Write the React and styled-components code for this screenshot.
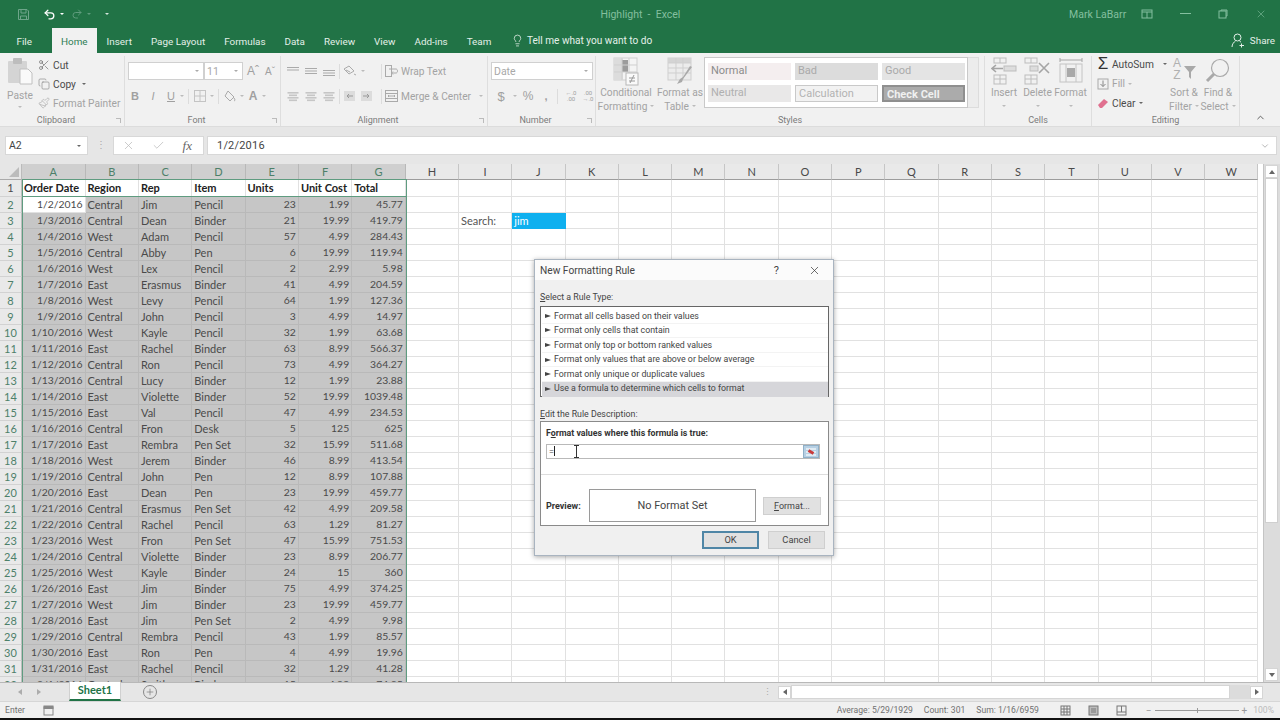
import React from 'react';
import styled, { createGlobalStyle } from 'styled-components';
import { Undo2, Redo2, Lightbulb, Scissors, Copy, Paintbrush, ChevronUp, ChevronDown, X, Check, Plus } from 'lucide-react';

const GlobalStyle = createGlobalStyle`
  html, body { margin: 0; padding: 0; background: #000; }
  body { font-family: Roboto, "Open Sans", sans-serif; overflow: hidden; }
  * { box-sizing: border-box; }
`;

const Page = styled.div`
  position: relative;
  width: 1280px;
  height: 720px;
  display: flex;
  flex-direction: column;
  overflow: hidden;
  background: #efefef;
  border-bottom: 2px solid #111;
`;

/* title bar */
const TitleBar = styled.div`
  height: 28px;
  background: #217346;
  display: flex;
  align-items: center;
  color: #84bf9f;
  font-size: 10.5px;
  position: relative;
`;
const QuickAccess = styled.div`
  display: flex;
  align-items: center;
  width: 581px;
  padding-left: 17px;
  gap: 4px;
`;
const Caret = styled.span`
  width: 0;
  height: 0;
  border-left: 2px solid transparent;
  border-right: 2px solid transparent;
  border-top: 2.5px solid ${(p) => p.$color || '#8a8a8a'};
  margin-left: ${(p) => p.$gap || 0}px;
  display: inline-block;
  flex: none;
`;
const DocTitle = styled.div`
  width: 142px;
  text-align: center;
  white-space: pre;
`;
const UserName = styled.div`
  margin-left: 359px;
  width: 60px;
  white-space: nowrap;
`;
const WinButtons = styled.div`
  display: flex;
  align-items: center;
`;
const WinButton = styled.div`
  width: 38px;
  display: flex;
  justify-content: center;
`;

/* tabs */
const TabBar = styled.div`
  height: 25px;
  background: #217346;
  display: flex;
  align-items: stretch;
  padding-left: 7px;
  font-size: 9.9px;
  color: #e4f0e9;
`;
const Tab = styled.div`
  padding: 1px 9.5px 0;
  display: flex;
  align-items: center;
  white-space: nowrap;
  background: ${(p) => (p.$active ? '#f1f1f1' : 'transparent')};
  color: ${(p) => (p.$active ? '#2f7d55' : '#e4f0e9')};
  margin-right: ${(p) => p.$mr || 0}px;
`;
const TellMe = styled.div`
  display: flex;
  align-items: center;
  gap: 3px;
  margin-left: 10px;
  font-size: 10.1px;
  white-space: nowrap;
`;
const Share = styled.div`
  margin-left: auto;
  display: flex;
  align-items: center;
  gap: 5px;
  padding-right: 5px;
`;

/* ribbon */
const Ribbon = styled.div`
  height: 74px;
  background: #f1f1f1;
  border-bottom: 1px solid #dcdcdc;
  display: flex;
  color: #a3a3a3;
  font-size: 10.2px;
  position: relative;
`;
const GroupBox = styled.div`
  width: ${(p) => p.$w}px;
  flex: none;
  border-right: 1px solid #dedede;
  margin: 3px 0 0;
  height: 70px;
  display: flex;
  flex-direction: column;
  position: relative;
`;
const GroupBody = styled.div`
  height: 56px;
  flex: none;
  display: flex;
  padding-left: ${(p) => p.$pl || 0}px;
  gap: ${(p) => p.$gap || 0}px;
`;
const GroupLabel = styled.div`
  height: 13px;
  flex: none;
  margin-top: 2px;
  padding-right: ${(p) => (p.$launcher ? 12 : 0)}px;
  font-size: 9px;
  line-height: 13px;
  text-align: center;
  color: #7b7b7b;
`;
const Launcher = styled.span`
  position: absolute;
  right: 3px;
  bottom: 3px;
  width: 5px;
  height: 5px;
  border-left: 1px solid #bbb;
  border-bottom: 1px solid #bbb;
  transform: rotate(180deg);
`;
const PasteBtn = styled.div`
  width: 34px;
  display: flex;
  flex-direction: column;
  align-items: center;
  line-height: 13.5px;
  svg { flex: none; margin-bottom: 3px; }
`;
const SmallCol = styled.div`
  display: flex;
  flex-direction: column;
  justify-content: space-between;
  flex: none;
  width: ${(p) => (p.$w ? `${p.$w}px` : 'auto')};
  margin-left: ${(p) => p.$ml || 0}px;
  padding: ${(p) => p.$top || 0}px 0 1px;
`;
const SmallBtn = styled.div`
  display: flex;
  align-items: center;
  gap: 3px;
  height: 16px;
  white-space: nowrap;
  color: ${(p) => (p.$on ? '#4a4a4a' : '#a3a3a3')};
`;
const SumGlyph = styled.span`
  width: 12px;
  font-size: 17px;
  line-height: 14px;
  font-weight: 500;
  text-align: center;
  color: #333;
  font-family: "Liberation Sans", sans-serif;
`;
const RowCol = styled.div`
  display: flex;
  flex-direction: column;
  gap: 7px;
  padding-top: 6px;
`;
const ToolRow = styled.div`
  display: flex;
  align-items: center;
  height: 18px;
  gap: ${(p) => p.$gap || 0}px;
  margin-left: ${(p) => p.$ml || 0}px;
  white-space: nowrap;
`;
const FieldBox = styled.div`
  width: ${(p) => p.$w}px;
  height: 18px;
  background: #fff;
  border: 1px solid #d0d0d0;
  display: flex;
  align-items: center;
  justify-content: space-between;
  padding: 0 4px 0 2px;
  font-size: 10.5px;
  color: #a8a8a8;
  margin-right: ${(p) => p.$mr || 0}px;
`;
const Glyph = styled.span`
  width: ${(p) => p.$w || 18}px;
  text-align: center;
  font-weight: ${(p) => (p.$bold ? 700 : 400)};
  font-style: ${(p) => (p.$italic ? 'italic' : 'normal')};
  text-decoration: ${(p) => (p.$under ? 'underline' : 'none')};
  font-size: ${(p) => p.$size || 11}px;
  color: #a0a0a0;
  font-family: "Liberation Sans", sans-serif;
`;
const DecimalGlyph = styled.span`
  width: ${(p) => p.$w}px;
  font-size: 6px;
  line-height: 6.5px;
  text-align: center;
  color: #a0a0a0;
  white-space: pre;
`;
const Divider = styled.span`
  width: 1px;
  height: 15px;
  background: #dcdcdc;
  margin: 0 ${(p) => p.$mr ?? 4}px 0 ${(p) => p.$ml ?? 4}px;
  flex: none;
`;
const BigBtn = styled.div`
  width: ${(p) => p.$w || 50}px;
  flex: none;
  display: flex;
  flex-direction: column;
  align-items: center;
  text-align: center;
  line-height: 13.5px;
  padding-top: 1px;
  white-space: nowrap;
  svg { flex: none; }
`;
const CaretLine = styled.span`
  height: 13.5px;
  display: flex;
  align-items: center;
`;
const Gallery = styled.div`
  width: 264px;
  height: 51px;
  margin: 1px 0 0 0;
  background: #fff;
  border: 1px solid #c9c9c9;
  display: grid;
  grid-template-columns: repeat(3, 83px);
  grid-auto-rows: 17px;
  gap: 5px 4px;
  padding: 5px 3px;
`;
const StyleChip = styled.div`
  background: ${(p) => p.$bg || '#f4eeef'};
  border: ${(p) => (p.$border ? `${p.$bw || 1}px solid ${p.$border}` : 'none')};
  color: ${(p) => p.$color || '#a0a0a0'};
  font-weight: ${(p) => (p.$bold ? 700 : 400)};
  font-size: 11px;
  line-height: 16px;
  padding-left: 3px;
  white-space: nowrap;
`;
const GalleryScroll = styled.div`
  width: 11px;
  height: 51px;
  margin-top: 1px;
  background: #ececec;
  border: 1px solid #dcdcdc;
  border-left: none;
`;
const Collapse = styled.div`
  position: absolute;
  right: 14px;
  bottom: 3px;
  color: #555;
  display: flex;
`;

/* formula bar */
const FormulaStrip = styled.div`
  height: 37px;
  background: #e6e6e6;
  display: flex;
  align-items: flex-start;
  padding: 9px 3px 0 5px;
`;
const NameBox = styled.div`
  width: 83px;
  height: 19px;
  background: #fff;
  border: 1px solid #d8d8d8;
  font-size: 10.5px;
  color: #444;
  display: flex;
  align-items: center;
  justify-content: space-between;
  padding: 0 6px 0 3px;
`;
const Grip = styled.div`
  width: 25px;
  text-align: center;
  color: #aaa;
  font-size: 10px;
  line-height: 17px;
`;
const FxBox = styled.div`
  width: 91px;
  height: 19px;
  background: #fff;
  border: 1px solid #d8d8d8;
  display: flex;
  align-items: center;
  justify-content: space-between;
  color: #bbb;
  padding: 0 11px 0 8px;
`;
const Fx = styled.span`
  font-family: "Liberation Serif", serif;
  font-style: italic;
  font-size: 13px;
  color: #666;
`;
const FormulaInput = styled.div`
  flex: 1;
  height: 19px;
  margin-left: 3px;
  background: #fff;
  border: 1px solid #d8d8d8;
  font-size: 11px;
  letter-spacing: 0.2px;
  color: #444;
  display: flex;
  align-items: center;
  justify-content: space-between;
  padding: 0 6px 0 9px;
`;

/* sheet */
const SheetArea = styled.div`
  flex: 1;
  display: flex;
  background: #fff;
  min-height: 0;
  overflow: hidden;
`;
const GridWrap = styled.div`
  position: relative;
  width: 1264px;
  height: 100%;
  overflow: hidden;
  border-right: 1px solid #c4c4c4;
`;
const Grid = styled.div`
  display: grid;
  grid-template-columns: 22px 63.5px 53.5px 53.3px 53.3px 53.3px 53.3px 53.5px repeat(16, 53.3px);
  grid-template-rows: 16px 17px repeat(31, 16px);
  font-size: 11px;
  font-family: Lato, "Open Sans", sans-serif;
  color: #4d4d4d;
`;
const Corner = styled.div`
  background: #e6e6e6;
  border-right: 1px solid #bbb;
  border-bottom: 1px solid #aaa;
  position: relative;
  &::after {
    content: '';
    position: absolute;
    right: 2px;
    bottom: 2px;
    border-style: solid;
    border-width: 0 0 10px 10px;
    border-color: transparent transparent #bcbcbc transparent;
  }
`;
const ColHead = styled.div`
  background: ${(p) => (p.$sel ? '#cfcfcf' : '#e9e9e9')};
  border-right: 1px solid ${(p) => (p.$sel ? '#b8b8b8' : '#c6c6c6')};
  border-bottom: 1px solid #9c9c9c;
  color: ${(p) => (p.$sel ? '#4d8069' : '#4a4a4a')};
  font-size: 11px;
  line-height: 15px;
  text-align: center;
`;
const RowHead = styled.div`
  background: #e9e9e9;
  border-right: 1px solid #bdbdbd;
  border-bottom: 1px solid #d2d2d2;
  color: ${(p) => (p.$sel ? '#4d8069' : '#4a4a4a')};
  font-size: 11px;
  line-height: 15px;
  text-align: center;
`;
const Cell = styled.div`
  background: ${(p) => (p.$sel ? '#c6c6c6' : '#fff')};
  border-right: 1px solid ${(p) => (p.$sel ? '#b9b9b9' : '#e1e1e1')};
  border-bottom: 1px solid ${(p) => (p.$sel ? '#b9b9b9' : '#e1e1e1')};
  text-align: ${(p) => (p.$right ? 'right' : 'left')};
  font-size: ${(p) => (p.$right ? 10.4 : 11)}px;
  font-weight: ${(p) => (p.$bold ? 700 : 400)};
  color: ${(p) => (p.$bold ? '#222' : '#4a4a4a')};
  padding: 0 2px;
  line-height: 15px;
  white-space: nowrap;
  overflow: visible;
`;
const SearchLabel = styled(Cell)`
  color: #555;
  padding-left: 2px;
`;
const SearchCell = styled(Cell)`
  background: #0fb0ef;
  color: #fff;
  border-color: #0fb0ef;
`;
const HeaderFrame = styled.div`
  position: absolute;
  left: 22px;
  top: 15px;
  width: 385px;
  height: 18px;
  border: 1.5px solid #5f9c80;
  pointer-events: none;
`;
const BodyFrame = styled.div`
  position: absolute;
  left: 22px;
  top: 32px;
  width: 385px;
  height: 500px;
  border: 1.5px solid #5f9c80;
  pointer-events: none;
`;
const VScroll = styled.div`
  flex: 1;
  background: #dcdcdc;
  padding: 1px 2px 0 1px;
  display: flex;
  flex-direction: column;
`;
const ScrollBtn = styled.div`
  height: 13px;
  width: 13px;
  background: #fff;
  border: 1px solid #d5d5d5;
  display: flex;
  align-items: center;
  justify-content: center;
  margin-top: ${(p) => (p.$end ? 'auto' : '0')};
  margin-bottom: ${(p) => (p.$end ? '1px' : '0')};
`;
const Arrow = styled.span`
  width: 0;
  height: 0;
  border-style: solid;
  border-color: transparent;
  ${(p) => p.$dir === 'up' && 'border-width: 0 3px 4px; border-bottom-color: #666;'}
  ${(p) => p.$dir === 'down' && 'border-width: 4px 3px 0; border-top-color: #666;'}
  ${(p) => p.$dir === 'left' && 'border-width: 3px 4px 3px 0; border-right-color: #666;'}
  ${(p) => p.$dir === 'right' && 'border-width: 3px 0 3px 4px; border-left-color: #666;'}
`;
const VThumb = styled.div`
  height: 345px;
  background: #fff;
  border: 1px solid #cfcfcf;
  margin: 0;
  width: 13px;
`;

/* sheet tabs */
const TabStrip = styled.div`
  height: 19px;
  background: #e6e6e6;
  border-top: 1px solid #b8b8b8;
  display: flex;
  align-items: stretch;
  position: relative;
`;
const NavArrows = styled.div`
  width: 69px;
  display: flex;
  align-items: center;
  gap: 15px;
  padding-left: 18px;
  opacity: 0.45;
`;
const SheetTab = styled.div`
  width: 52px;
  background: #fff;
  border-bottom: 2px solid #217346;
  border-left: 1px solid #d0d0d0;
  border-right: 1px solid #d0d0d0;
  color: #217346;
  font-family: Lato, sans-serif;
  font-weight: 700;
  font-size: 11px;
  text-align: center;
  line-height: 15px;
  margin-top: -1px;
`;
const AddSheet = styled.div`
  width: 14px;
  height: 14px;
  margin: 2px 0 0 22px;
  border: 1px solid #888;
  border-radius: 50%;
  display: flex;
  align-items: center;
  justify-content: center;
  color: #777;
`;
const HScrollWrap = styled.div`
  margin-left: auto;
  display: flex;
  align-items: center;
  width: 520px;
  padding-right: 17px;
`;
const HScrollGrip = styled.div`
  width: 18px;
  padding-right: 4px;
  color: #aaa;
  font-size: 9px;
  line-height: 1;
  text-align: center;
`;
const HBtn = styled.div`
  width: 13px;
  height: 13px;
  background: #fff;
  border: 1px solid #d5d5d5;
  display: flex;
  align-items: center;
  justify-content: center;
`;
const HThumb = styled.div`
  width: 439px;
  height: 14px;
  background: #fff;
  border: 1px solid #d5d5d5;
`;
const HTrack = styled.div`
  flex: 1;
  height: 14px;
  background: #dcdcdc;
`;

/* status bar */
const StatusBar = styled.div`
  height: 17px;
  background: #f0f0f0;
  border-top: 1px solid #d6d6d6;
  display: flex;
  align-items: center;
  color: #707070;
  font-size: 8.6px;
  padding-left: 5px;
`;
const MacroSlot = styled.span`
  margin-left: 18px;
  display: flex;
`;
const StatusStats = styled.div`
  margin-left: auto;
  display: flex;
  gap: 11px;
  white-space: nowrap;
`;
const ViewIcons = styled.div`
  display: flex;
  gap: 17px;
  margin-left: 21px;
  align-items: center;
`;
const Zoomer = styled.div`
  display: flex;
  align-items: center;
  margin-left: 19px;
  gap: 3px;
  font-size: 10px;
  color: #999;
`;
const ZoomTrack = styled.div`
  width: 84px;
  height: 1px;
  background: #999;
  position: relative;
  &::after {
    content: '';
    position: absolute;
    left: 42px;
    top: -2px;
    width: 1px;
    height: 5px;
    background: #999;
  }
`;
const ZoomPct = styled.span`
  margin: 0 6px 0 6px;
  color: #bbb;
`;

/* dialog */
const Dialog = styled.div`
  position: absolute;
  left: 534px;
  top: 259px;
  width: 300px;
  height: 297px;
  background: #f0f0f0;
  border: 1px solid #a9b4c0;
  box-shadow: 0 1px 5px rgba(0, 0, 0, 0.35);
  font-size: 8.8px;
  color: #444;
  display: flex;
  flex-direction: column;
`;
const DialogHead = styled.div`
  height: 20px;
  background: #fbfbfb;
  display: flex;
  align-items: center;
  padding: 0 12px 0 5px;
  font-size: 10.2px;
  color: #444;
`;
const DialogHeadHelp = styled.span`
  margin-left: auto;
  margin-right: 29px;
  font-size: 11px;
`;
const FieldLabel = styled.div`
  padding-left: 5px;
  height: 13px;
  line-height: 13px;
  margin-top: ${(p) => p.$mt}px;
  u { text-decoration: underline; }
`;
const RuleList = styled.div`
  margin: 2px 4px 0 5px;
  height: 91px;
  background: #fff;
  border: 1px solid #666;
  padding: 2px 0 0 1px;
`;
const RuleItem = styled.div`
  height: 14.6px;
  line-height: 14.6px;
  padding-left: 3px;
  display: flex;
  align-items: center;
  gap: 3px;
  background: ${(p) => (p.$sel ? '#d6d6da' : 'transparent')};
  border-bottom: 1px solid ${(p) => (p.$sel ? 'transparent' : '#f3f3f3')};
  white-space: nowrap;
  font-size: 8.8px;
`;
const RuleArrow = styled.span`
  width: 0;
  height: 0;
  border-style: solid;
  border-color: transparent transparent transparent #444;
  border-width: 2px 0 2px 6px;
  flex: none;
`;
const DescBox = styled.div`
  margin: 0 4px 0 5px;
  height: 105px;
  background: #fff;
  border: 1px solid #8a8a8a;
  padding: 5px 5px 0 5px;
  display: flex;
  flex-direction: column;
`;
const BoldLabel = styled.div`
  font-weight: 700;
  color: #333;
  font-size: 8.8px;
  line-height: 13px;
  white-space: nowrap;
`;
const FormulaField = styled.div`
  position: relative;
  margin-top: 4px;
  height: 15px;
  margin-right: 3px;
  border: 1px solid #b9b9b9;
  display: flex;
  align-items: center;
  justify-content: space-between;
  padding-left: 2px;
  font-size: 9px;
`;
const TextCaret = styled.span`
  display: inline-block;
  width: 1px;
  height: 10px;
  background: #222;
  vertical-align: -1px;
`;
const IBeam = styled.span`
  position: absolute;
  left: 26px;
  top: 0;
  display: flex;
`;
const RefBtn = styled.span`
  width: 16px;
  height: 13px;
  background: #b7d0e4;
  border: 1px solid #8fb0c8;
  display: flex;
  align-items: center;
  justify-content: center;
`;
const Rule = styled.div`
  height: 1px;
  background: #ddd;
  margin: 15px -5px 0;
`;
const PreviewRow = styled.div`
  display: flex;
  align-items: center;
  margin-top: 14px;
`;
const PreviewLabel = styled.div`
  width: 43px;
  font-weight: 700;
  font-size: 9px;
  color: #333;
`;
const PreviewBox = styled.div`
  width: 167px;
  height: 33px;
  border: 1px solid #9a9a9a;
  display: flex;
  align-items: center;
  justify-content: center;
  font-size: 10.9px;
  color: #444;
`;
const FormatBtn = styled.div`
  width: 58px;
  height: 18px;
  margin-left: 7px;
  background: #e1e1e1;
  border: 1px solid #cfcfcf;
  font-size: 9px;
  text-align: center;
  line-height: 16px;
`;
const DialogFooter = styled.div`
  display: flex;
  justify-content: flex-end;
  gap: 9px;
  margin-top: 5px;
  padding-right: 8px;
`;
const DlgBtn = styled.div`
  width: 57px;
  height: 18px;
  background: #e1e1e1;
  border: ${(p) => (p.$primary ? '1px solid #4f86a6' : '1px solid #cfcfcf')};
  box-shadow: ${(p) => (p.$primary ? 'inset 0 0 0 1px #4f86a6' : 'none')};
  text-align: center;
  line-height: 16px;
  font-size: 9.3px;
`;

const grey = '#aaaaaa';

const PasteIcon = () => (
  <svg width="26" height="30" viewBox="0 0 26 30">
    <rect x="1" y="5" width="19" height="22" rx="1" fill="#d4d4d4" />
    <rect x="6" y="2" width="9" height="6" rx="1" fill="#bdbdbd" />
    <path d="M13 13h8l4 4v11H13z" fill="#fafafa" stroke="#c0c0c0" />
  </svg>
);

const LinesIcon = ({ widths, top = 4, thick = 1, color = grey }) => (
  <svg width="16" height="14" viewBox="0 0 16 14">
    {widths.map((w, i) => (
      <rect key={i} x={(16 - w) / 2} y={top + i * 2.5} width={w} height={thick} fill={color} />
    ))}
  </svg>
);

const IndentIcon = ({ flip }) => (
  <svg width="15" height="14" viewBox="0 0 15 14">
    <rect x="2" y="2" width="11" height="10" fill="#dcdcdc" />
    <path d={flip ? 'M4 7h6M8 5l2 2-2 2' : 'M11 7H5M7 5L5 7l2 2'} stroke="#999" fill="none" />
  </svg>
);

const WrapIcon = () => (
  <svg width="15" height="14" viewBox="0 0 15 14" fill="none" stroke={grey}>
    <rect x="1.500" y="1.500" width="6" height="11" />
    <path d="M5 5h7c2 0 2 4 0 4H8M9 7.500L7.500 9 9 10.500" />
  </svg>
);

const MergeIcon = () => (
  <svg width="15" height="14" viewBox="0 0 15 14" fill="none" stroke={grey}>
    <rect x="1.500" y="1.500" width="12" height="11" />
    <path d="M1.500 4.500h12M1.500 9.500h12M4 7h7M5 6L4 7l1 1M10 6l1 1-1 1" />
  </svg>
);

const BordersIcon = () => (
  <svg width="14" height="14" viewBox="0 0 14 14" fill="none" stroke="#c4c4c4">
    <rect x="1.500" y="1.500" width="11" height="11" />
    <path d="M7 1.500v11M1.500 7h11" />
  </svg>
);

const FillIcon = () => (
  <svg width="14" height="14" viewBox="0 0 14 14" fill="none" stroke={grey}>
    <path d="M5 2l6 6-4 4-5-5zM11 9c1 1.500 1.500 2.500 0 3" />
  </svg>
);

const OrientIcon = () => (
  <svg width="16" height="14" viewBox="0 0 16 14" fill="none" stroke={grey}>
    <path d="M2 5l5-3 5 5-5 3zM4 6l4 2M12 10l2 1" />
  </svg>
);

const CondFormatIcon = () => (
  <svg width="26" height="29" viewBox="0 0 26 29">
    <rect x="1" y="1" width="23" height="22" fill="#f4f4f4" stroke="#cfcfcf" />
    <rect x="1" y="1" width="9" height="22" fill="#dcdcdc" />
    <rect x="9" y="3" width="6" height="12" fill="#9c9c9c" />
    <path d="M1 8h23M1 15h23M9 1v22M16 1v22" stroke="#cfcfcf" />
    <rect x="13" y="16" width="12" height="12" fill="#fafafa" stroke="#b8b8b8" />
    <path d="M16 21h6M16 24h6M21 18l-4 8" stroke="#999" />
  </svg>
);

const TableIcon = () => (
  <svg width="27" height="29" viewBox="0 0 27 29">
    <rect x="1" y="1" width="23" height="22" fill="#ececec" stroke="#cfcfcf" />
    <rect x="1" y="1" width="23" height="5" fill="#d4d4d4" />
    <path d="M1 6h23M1 11h23M1 16h23M9 1v22M16 1v22" stroke="#cfcfcf" />
    <path d="M25 10l-9 12-1 3-5 2 3-5 3-2 7-11z" fill="#a9a9a9" />
  </svg>
);

const InsertIcon = () => (
  <svg width="26" height="29" viewBox="0 0 26 29" fill="none" stroke="#bdbdbd">
    <rect x="3" y="1" width="12" height="5" />
    <path d="M9 1v5" />
    <rect x="3" y="18" width="12" height="9" />
    <path d="M9 18v9M3 22h12" />
    <rect x="13" y="9" width="12" height="5" fill="#ddd" />
    <path d="M12 11.500H1M5 8l-4 3.500L5 15" stroke="#a5a5a5" strokeWidth="1.600" />
  </svg>
);

const DeleteIcon = () => (
  <svg width="27" height="29" viewBox="0 0 27 29" fill="none" stroke="#bdbdbd">
    <rect x="1" y="1" width="12" height="5" />
    <path d="M7 1v5" />
    <rect x="1" y="18" width="12" height="9" />
    <path d="M7 18v9M1 22h12" />
    <rect x="6" y="9" width="8" height="5" fill="#ddd" />
    <path d="M15 6l10 10M25 6L15 16" stroke="#a5a5a5" strokeWidth="1.600" />
  </svg>
);

const FormatIcon = () => (
  <svg width="26" height="29" viewBox="0 0 26 29" fill="none" stroke="#c4c4c4">
    <path d="M2 3h22M2 1v4M24 1v4" stroke="#a5a5a5" />
    <rect x="2" y="7" width="22" height="18" />
    <path d="M8 7v18M18 7v18" />
    <rect x="9" y="11" width="8" height="9" fill="#a9a9a9" stroke="none" />
  </svg>
);

const SortIcon = () => (
  <svg width="26" height="29" viewBox="0 0 26 29">
    <path d="M13 9h12l-5 6v7l-2-2v-5z" fill="#a9a9a9" />
  </svg>
);

const AzLetters = styled.span`
  position: absolute;
  left: 2px;
  top: 1px;
  font-size: 12px;
  line-height: 11.500px;
  color: #b0b0b0;
  font-family: "Liberation Sans", sans-serif;
`;
const SortWrap = styled.span`
  position: relative;
  display: flex;
`;

const FindIcon = () => (
  <svg width="26" height="29" viewBox="0 0 26 29" fill="none">
    <circle cx="15" cy="11" r="8.500" stroke="#a9a9a9" strokeWidth="1.200" />
    <path d="M9 17L2 24" stroke="#a9a9a9" strokeWidth="3" />
  </svg>
);

const EraserIcon = () => (
  <svg width="12" height="12" viewBox="0 0 12 12">
    <path d="M1 8l6-6 4 3-6 6H3z" fill="#e0708f" />
  </svg>
);

const FillDownIcon = () => (
  <svg width="12" height="12" viewBox="0 0 12 12" fill="none" stroke="#aaa">
    <rect x="1" y="1" width="10" height="10" />
    <path d="M6 2.500v6M3.500 6L6 8.500 8.500 6" stroke="#888" />
  </svg>
);

const SaveIcon = () => (
  <svg width="13" height="13" viewBox="0 0 13 13" fill="none" stroke="#6ea58a">
    <path d="M1.500 1.500h8.500l1.500 1.500v8.500h-10z" />
    <path d="M4 1.500v3.500h5V1.500M3.500 11.500V8h6v3.500" />
  </svg>
);

const BookIcon = () => (
  <svg width="12" height="10" viewBox="0 0 12 10" fill="none" stroke="#84bf9f">
    <rect x="1" y="1" width="10" height="8" />
    <path d="M6 3v6M1 3h10" />
  </svg>
);

const RestoreIcon = () => (
  <svg width="10" height="10" viewBox="0 0 10 10" fill="none" stroke="#84bf9f">
    <rect x="1" y="2" width="7" height="7" />
    <path d="M3 2V1h6v6H8" />
  </svg>
);

const ShareIcon = () => (
  <svg width="14" height="15" viewBox="0 0 14 15" fill="none" stroke="#e4f0e9">
    <circle cx="6.500" cy="4.500" r="3.500" />
    <path d="M1 14c0-3 2-5 3.500-6M8.500 8c.5.300 1 .7 1.500 1.200M10.500 10.500v4M8.500 12.500h4.500" />
  </svg>
);

const MacroIcon = () => (
  <svg width="11" height="11" viewBox="0 0 11 11" fill="none" stroke="#888">
    <rect x="1" y="2" width="9" height="8" />
    <rect x="1" y="1" width="9" height="2.500" fill="#888" />
  </svg>
);

const ViewNormal = () => (
  <svg width="11" height="11" viewBox="0 0 11 11" fill="none" stroke="#777">
    <rect x="1" y="1" width="9" height="9" />
    <path d="M4 1v9M7 1v9M1 4h9M1 7h9" />
  </svg>
);

const ViewLayout = () => (
  <svg width="11" height="11" viewBox="0 0 11 11" fill="#bbb" stroke="#777">
    <rect x="1" y="1" width="9" height="9" />
    <rect x="3" y="3" width="5" height="5" fill="#999" stroke="none" />
  </svg>
);

const ViewBreak = () => (
  <svg width="11" height="11" viewBox="0 0 11 11" fill="none" stroke="#777">
    <rect x="1" y="1" width="9" height="9" />
    <path d="M1 7h9M5.500 1v6" />
  </svg>
);

const RefIcon = () => (
  <svg width="12" height="10" viewBox="0 0 12 10">
    <path d="M1 2h10M1 5h10M1 8h10" stroke="#eef3f7" strokeWidth="1.400" />
    <path d="M3.500 3.500l5 3" stroke="#c93a3a" strokeWidth="3" />
  </svg>
);

const IBeamIcon = () => (
  <svg width="7" height="13" viewBox="0 0 7 13" fill="none" stroke="#333">
    <path d="M1 .5h5M1 12.500h5M3.500 .5v12" />
  </svg>
);

const columns = 'ABCDEFGHIJKLMNOPQRSTUVW'.split('');

const headers = ['Order Date', 'Region', 'Rep', 'Item', 'Units', 'Unit Cost', 'Total'];

const rows = [
  ['1/2/2016', 'Central', 'Jim', 'Pencil', 23, 1.99, 45.77],
  ['1/3/2016', 'Central', 'Dean', 'Binder', 21, 19.99, 419.79],
  ['1/4/2016', 'West', 'Adam', 'Pencil', 57, 4.99, 284.43],
  ['1/5/2016', 'Central', 'Abby', 'Pen', 6, 19.99, 119.94],
  ['1/6/2016', 'West', 'Lex', 'Pencil', 2, 2.99, 5.98],
  ['1/7/2016', 'East', 'Erasmus', 'Binder', 41, 4.99, 204.59],
  ['1/8/2016', 'West', 'Levy', 'Pencil', 64, 1.99, 127.36],
  ['1/9/2016', 'Central', 'John', 'Pencil', 3, 4.99, 14.97],
  ['1/10/2016', 'West', 'Kayle', 'Pencil', 32, 1.99, 63.68],
  ['1/11/2016', 'East', 'Rachel', 'Binder', 63, 8.99, 566.37],
  ['1/12/2016', 'Central', 'Ron', 'Pencil', 73, 4.99, 364.27],
  ['1/13/2016', 'Central', 'Lucy', 'Binder', 12, 1.99, 23.88],
  ['1/14/2016', 'East', 'Violette', 'Binder', 52, 19.99, 1039.48],
  ['1/15/2016', 'East', 'Val', 'Pencil', 47, 4.99, 234.53],
  ['1/16/2016', 'Central', 'Fron', 'Desk', 5, 125, 625],
  ['1/17/2016', 'East', 'Rembra', 'Pen Set', 32, 15.99, 511.68],
  ['1/18/2016', 'West', 'Jerem', 'Binder', 46, 8.99, 413.54],
  ['1/19/2016', 'Central', 'John', 'Pen', 12, 8.99, 107.88],
  ['1/20/2016', 'East', 'Dean', 'Pen', 23, 19.99, 459.77],
  ['1/21/2016', 'Central', 'Erasmus', 'Pen Set', 42, 4.99, 209.58],
  ['1/22/2016', 'Central', 'Rachel', 'Pencil', 63, 1.29, 81.27],
  ['1/23/2016', 'West', 'Fron', 'Pen Set', 47, 15.99, 751.53],
  ['1/24/2016', 'Central', 'Violette', 'Binder', 23, 8.99, 206.77],
  ['1/25/2016', 'West', 'Kayle', 'Binder', 24, 15, 360],
  ['1/26/2016', 'East', 'Jim', 'Binder', 75, 4.99, 374.25],
  ['1/27/2016', 'West', 'Jim', 'Binder', 23, 19.99, 459.77],
  ['1/28/2016', 'East', 'Jim', 'Pen Set', 2, 4.99, 9.98],
  ['1/29/2016', 'Central', 'Rembra', 'Pencil', 43, 1.99, 85.57],
  ['1/30/2016', 'East', 'Ron', 'Pen', 4, 4.99, 19.96],
  ['1/31/2016', 'East', 'Rachel', 'Pencil', 32, 1.29, 41.28],
  ['2/1/2016', 'Central', 'Smith', 'Binder', 15, 4.99, 74.85],
];

const ruleTypes = [
  'Format all cells based on their values',
  'Format only cells that contain',
  'Format only top or bottom ranked values',
  'Format only values that are above or below average',
  'Format only unique or duplicate values',
  'Use a formula to determine which cells to format',
];

const tabs = ['Insert', 'Page Layout', 'Formulas', 'Data', 'Review', 'View', 'Add-ins', 'Team'];

const isRight = (i) => i === 0 || i >= 4;

const renderEmptyCells = (rowNo) =>
  columns.slice(7).map((c) => {
    if (rowNo === 3 && c === 'I') return <SearchLabel key={c}>Search:</SearchLabel>;
    if (rowNo === 3 && c === 'J') return <SearchCell key={c}>jim</SearchCell>;
    return <Cell key={c} />;
  });

const Group = ({ w, label, launcher, pl, gap, children }) => (
  <GroupBox $w={w}>
    <GroupBody $pl={pl} $gap={gap}>{children}</GroupBody>
    <GroupLabel $launcher={launcher}>{label}</GroupLabel>
    {launcher && <Launcher />}
  </GroupBox>
);

const App = () => (
  <Page>
    <GlobalStyle />
    <TitleBar>
      <QuickAccess>
        <SaveIcon />
        <Undo2 size={13} color="#fff" strokeWidth={2.4} style={{ marginLeft: 9 }} />
        <Caret $color="#fff" />
        <Redo2 size={12} color="#5f9c7d" style={{ marginLeft: 3 }} />
        <Caret $color="#5f9c7d" />
        <Caret $color="#d5e6dc" $gap={10} />
      </QuickAccess>
      <DocTitle>Highlight  -  Excel</DocTitle>
      <UserName>Mark LaBarr</UserName>
      <WinButtons>
        <WinButton><BookIcon /></WinButton>
        <WinButton><svg width="11" height="2"><rect width="11" height="1" fill="#84bf9f" /></svg></WinButton>
        <WinButton><RestoreIcon /></WinButton>
        <WinButton><X size={12} color="#84bf9f" strokeWidth={1.2} /></WinButton>
      </WinButtons>
    </TitleBar>
    <TabBar>
      <Tab $mr={10}>File</Tab>
      <Tab $active>Home</Tab>
      {tabs.map((t) => <Tab key={t}>{t}</Tab>)}
      <TellMe>
        <Lightbulb size={13} strokeWidth={1.4} />
        Tell me what you want to do
      </TellMe>
      <Share>
        <ShareIcon />
        Share
      </Share>
    </TabBar>
    <Ribbon>
      <Group w={125} label="Clipboard" launcher pl={3}>
        <PasteBtn>
          <PasteIcon />
          Paste
          <CaretLine><Caret $color="#bbb" /></CaretLine>
        </PasteBtn>
        <SmallCol $top={1} $ml={1}>
          <SmallBtn $on><Scissors size={12} color="#666" strokeWidth={1.3} />Cut</SmallBtn>
          <SmallBtn $on><Copy size={12} color="#888" strokeWidth={1.3} />Copy<Caret $color="#666" $gap={3} /></SmallBtn>
          <SmallBtn><Paintbrush size={12} color="#aaa" strokeWidth={1.3} />Format Painter</SmallBtn>
        </SmallCol>
      </Group>
      <Group w={156} label="Font" launcher pl={3}>
        <RowCol>
          <ToolRow>
            <FieldBox $w={76}><span />
              <Caret $color="#aaa" />
            </FieldBox>
            <FieldBox $w={39} $mr={1}>11<Caret $color="#aaa" /></FieldBox>
            <Glyph $w={18} $size={12}>Aˆ</Glyph>
            <Glyph $w={16} $size={10}>Aˇ</Glyph>
          </ToolRow>
          <ToolRow $ml={-2}>
            <Glyph $bold>B</Glyph>
            <Glyph $italic>I</Glyph>
            <Glyph $under>U</Glyph>
            <Caret $color="#bbb" />
            <Divider />
            <BordersIcon />
            <Caret $color="#bbb" $gap={3} />
            <Divider />
            <FillIcon />
            <Caret $color="#bbb" $gap={3} />
            <Glyph $bold $size={12}>A</Glyph>
            <Caret $color="#bbb" />
          </ToolRow>
        </RowCol>
      </Group>
      <Group w={207} label="Alignment" launcher pl={4}>
        <RowCol>
          <ToolRow $gap={2}>
            <LinesIcon widths={[12, 12]} top={3} />
            <LinesIcon widths={[12, 12, 12]} top={4} />
            <LinesIcon widths={[12, 12, 12]} top={6} />
            <Divider $ml={0} $mr={0} />
            <OrientIcon />
            <Caret $color="#bbb" $gap={1} />
            <Divider $ml={14} $mr={0} />
            <WrapIcon />
            <span>Wrap Text</span>
          </ToolRow>
          <ToolRow $gap={2}>
            <LinesIcon widths={[11, 8, 11, 8]} top={3} thick={1.6} color="#c6c6c6" />
            <LinesIcon widths={[11, 8, 11, 8]} top={3} thick={1.6} color="#c6c6c6" />
            <LinesIcon widths={[11, 8, 11, 8]} top={3} thick={1.6} color="#c6c6c6" />
            <Divider $ml={0} $mr={0} />
            <IndentIcon />
            <IndentIcon flip />
            <Divider $ml={5} $mr={0} />
            <MergeIcon />
            <span>Merge &amp; Center</span>
            <Caret $color="#bbb" $gap={6} />
          </ToolRow>
        </RowCol>
      </Group>
      <Group w={108} label="Number" launcher pl={3}>
        <RowCol>
          <FieldBox $w={102}>Date<Caret $color="#aaa" /></FieldBox>
          <ToolRow $ml={4}>
            <Glyph $w={12} $size={13}>$</Glyph>
            <Caret $color="#bbb" $gap={6} />
            <Glyph $w={22} $size={12}>%</Glyph>
            <Glyph $w={14} $bold>,</Glyph>
            <Divider />
            <DecimalGlyph $w={18}>{'←.0\n.00'}</DecimalGlyph>
            <DecimalGlyph $w={16}>{'.00\n→.0'}</DecimalGlyph>
          </ToolRow>
        </RowCol>
      </Group>
      <Group w={389} label="Styles">
        <BigBtn $w={60}>
          <CondFormatIcon />
          Conditional
          <CaretLine>Formatting<Caret $color="#bbb" $gap={3} /></CaretLine>
        </BigBtn>
        <BigBtn $w={48}>
          <TableIcon />
          Format as
          <CaretLine>Table<Caret $color="#bbb" $gap={3} /></CaretLine>
        </BigBtn>
        <Gallery>
          <StyleChip $color="#8c8c8c">Normal</StyleChip>
          <StyleChip $bg="#dcdcdc" $color="#aaa">Bad</StyleChip>
          <StyleChip $bg="#e4e4e4" $color="#aaa">Good</StyleChip>
          <StyleChip $bg="#e9e8e8" $color="#b0b0b0">Neutral</StyleChip>
          <StyleChip $bg="#f2f2f2" $border="#c9c9c9" $color="#b3b3b3">Calculation</StyleChip>
          <StyleChip $bg="#ababab" $border="#8f8f8f" $bw={2} $color="#f0f0f0" $bold>Check Cell</StyleChip>
        </Gallery>
        <GalleryScroll />
      </Group>
      <Group w={107} label="Cells" pl={2}>
        <BigBtn $w={34}><InsertIcon />Insert<CaretLine><Caret $color="#bbb" /></CaretLine></BigBtn>
        <BigBtn $w={33}><DeleteIcon />Delete<CaretLine><Caret $color="#bbb" /></CaretLine></BigBtn>
        <BigBtn $w={33}><FormatIcon />Format<CaretLine><Caret $color="#bbb" /></CaretLine></BigBtn>
      </Group>
      <Group w={148} label="Editing" pl={5}>
        <SmallCol $w={70}>
          <SmallBtn $on><SumGlyph>Σ</SumGlyph>AutoSum<Caret $color="#666" $gap={6} /></SmallBtn>
          <SmallBtn><FillDownIcon />Fill<Caret $color="#bbb" /></SmallBtn>
          <SmallBtn $on><EraserIcon />Clear<Caret $color="#666" /></SmallBtn>
        </SmallCol>
        <BigBtn $w={34}>
          <SortWrap><AzLetters>A<br />Z</AzLetters><SortIcon /></SortWrap>
          Sort &amp;
          <CaretLine>Filter<Caret $color="#bbb" $gap={3} /></CaretLine>
        </BigBtn>
        <BigBtn $w={34}>
          <FindIcon />
          Find &amp;
          <CaretLine>Select<Caret $color="#bbb" $gap={3} /></CaretLine>
        </BigBtn>
      </Group>
      <Collapse><ChevronUp size={11} strokeWidth={2} /></Collapse>
    </Ribbon>
    <FormulaStrip>
      <NameBox>A2<Caret $color="#666" /></NameBox>
      <Grip>⋮</Grip>
      <FxBox>
        <X size={13} strokeWidth={1.4} />
        <Check size={13} strokeWidth={1.4} />
        <Fx>fx</Fx>
      </FxBox>
      <FormulaInput>1/2/2016<ChevronDown size={10} color="#aaa" /></FormulaInput>
    </FormulaStrip>
    <SheetArea>
      <GridWrap>
        <Grid>
          <Corner />
          {columns.map((c, i) => <ColHead key={c} $sel={i < 7}>{c}</ColHead>)}
          <RowHead>1</RowHead>
          {headers.map((h) => <Cell key={h} $bold>{h}</Cell>)}
          {renderEmptyCells(1)}
          {rows.map((r, ri) => (
            <React.Fragment key={ri}>
              <RowHead $sel>{ri + 2}</RowHead>
              {r.map((v, i) => (
                <Cell key={i} $sel={!(ri === 0 && i === 0)} $right={isRight(i)}>{v}</Cell>
              ))}
              {renderEmptyCells(ri + 2)}
            </React.Fragment>
          ))}
        </Grid>
        <HeaderFrame />
        <BodyFrame />
      </GridWrap>
      <VScroll>
        <ScrollBtn><Arrow $dir="up" /></ScrollBtn>
        <VThumb />
        <ScrollBtn $end><Arrow $dir="down" /></ScrollBtn>
      </VScroll>
    </SheetArea>
    <TabStrip>
      <NavArrows><Arrow $dir="left" /><Arrow $dir="right" /></NavArrows>
      <SheetTab>Sheet1</SheetTab>
      <AddSheet><Plus size={10} strokeWidth={1.6} /></AddSheet>
      <HScrollWrap>
        <HScrollGrip>⋮</HScrollGrip>
        <HBtn><Arrow $dir="left" /></HBtn>
        <HThumb />
        <HTrack />
        <HBtn><Arrow $dir="right" /></HBtn>
      </HScrollWrap>
    </TabStrip>
    <StatusBar>
      <span>Enter</span>
      <MacroSlot><MacroIcon /></MacroSlot>
      <StatusStats>
        <span>Average: 5/29/1929</span>
        <span>Count: 301</span>
        <span>Sum: 1/16/6959</span>
      </StatusStats>
      <ViewIcons>
        <ViewNormal />
        <ViewLayout />
        <ViewBreak />
      </ViewIcons>
      <Zoomer>
        −
        <ZoomTrack />
        +
      </Zoomer>
      <ZoomPct>100%</ZoomPct>
    </StatusBar>
    <Dialog>
      <DialogHead>
        New Formatting Rule
        <DialogHeadHelp>?</DialogHeadHelp>
        <X size={13} strokeWidth={1.3} color="#333" />
      </DialogHead>
      <FieldLabel $mt={11}><u>S</u>elect a Rule Type:</FieldLabel>
      <RuleList>
        {ruleTypes.map((r, i) => (
          <RuleItem key={r} $sel={i === 5}><RuleArrow />{r}</RuleItem>
        ))}
      </RuleList>
      <FieldLabel $mt={11}><u>E</u>dit the Rule Description:</FieldLabel>
      <DescBox>
        <BoldLabel>F<u>o</u>rmat values where this formula is true:</BoldLabel>
        <FormulaField>
          <span>=<TextCaret /></span>
          <IBeam><IBeamIcon /></IBeam>
          <RefBtn><RefIcon /></RefBtn>
        </FormulaField>
        <Rule />
        <PreviewRow>
          <PreviewLabel>Preview:</PreviewLabel>
          <PreviewBox>No Format Set</PreviewBox>
          <FormatBtn><u>F</u>ormat...</FormatBtn>
        </PreviewRow>
      </DescBox>
      <DialogFooter>
        <DlgBtn $primary>OK</DlgBtn>
        <DlgBtn>Cancel</DlgBtn>
      </DialogFooter>
    </Dialog>
  </Page>
);

export default App;
